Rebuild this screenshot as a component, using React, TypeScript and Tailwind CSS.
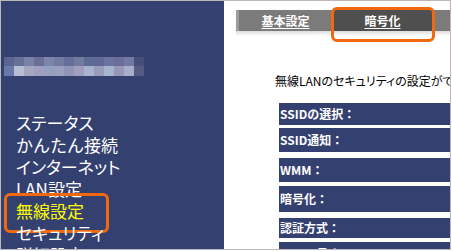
const mosaicTop = [
  'bg-[#5a6590]', 'bg-[#66719a]', 'bg-[#7a82a8]', 'bg-[#6a6f96]', 'bg-[#7a87ab]', 'bg-[#737ba0]', 'bg-[#636e99]',
  'bg-[#727aa0]', 'bg-[#5e6a96]', 'bg-[#5f6993]', 'bg-[#6b74a0]', 'bg-[#6a6f97]', 'bg-[#717ba2]', 'bg-[#454f7a]',
]
const mosaicBottom = [
  'bg-[#6878a8]', 'bg-[#b8bed6]', 'bg-[#a5a6bf]', 'bg-[#a09fc0]', 'bg-[#97a0c0]', 'bg-[#9ba0bf]', 'bg-[#8f96b8]',
  'bg-[#a09fbf]', 'bg-[#a8b4cf]', 'bg-[#9b9bba]', 'bg-[#a9b5ce]', 'bg-[#9797b8]', 'bg-[#a6aec9]', 'bg-[#555a82]',
]

const nav = ['ステータス', 'かんたん接続', 'インターネット', 'LAN設定', '無線設定', 'セキュリティ', '詳細設定']

// 右側の設定行（高さと間隔は画面に合わせて個別指定）
const rows = [
  { label: 'SSIDの選択：', cls: 'h-[22px]' },
  { label: 'SSID通知：', cls: 'h-[24px] mt-[3px]' },
  { label: 'WMM：', cls: 'h-[24px] mt-[6px]' },
  { label: '暗号化：', cls: 'h-[26px] mt-[4px]' },
  { label: '認証方式：', cls: 'h-[20px] mt-[6px]' },
  { label: 'キーの長さ', cls: 'h-[24px] mt-[4px]' },
]

function App() {
  return (
    <div className="w-[451px] h-[250px] overflow-hidden border border-[#bcb8b8] bg-white flex font-['Noto_Sans_CJK_JP',sans-serif]">
      <aside className="w-[223px] shrink-0 bg-[#344170] flex flex-col">
        <div className="shrink-0 mt-[56px] pl-[3px] flex flex-col">
          <div className="flex">
            {mosaicTop.map((c, i) => <div key={i} className={`w-[10px] h-[9px] ${c}`} />)}
          </div>
          <div className="flex">
            {mosaicBottom.map((c, i) => <div key={i} className={`w-[10px] h-[10px] ${c}`} />)}
          </div>
        </div>
        <ul className="shrink-0 mt-[36px] flex flex-col text-[17px] leading-[22px]">
          {nav.map((n) => (
            <li
              key={n}
              className={`shrink-0 h-[22px] relative pl-[15px] whitespace-nowrap ${n === '無線設定' ? 'text-[#ffff00]' : 'text-white'} ${n === 'かんたん接続' ? '' : "[font-feature-settings:'palt']"}`}
            >
              {n}
              {n === '無線設定' && (
                <span className="absolute left-[3px] top-[-7px] w-[105px] h-[40px] border-[3px] border-[#f0690f] rounded-[6px]" />
              )}
            </li>
          ))}
        </ul>
      </aside>
      <main className="flex-1 flex flex-col min-w-0">
        <div className="shrink-0 mt-[9px] ml-[12px] flex h-[21px] bg-[#7b7b7b]">
          <div className="w-[96px] h-full flex items-center justify-center border-l-[3px] border-[#9c9c9c]">
            <span className="text-white font-bold text-[12px] underline underline-offset-2">基本設定</span>
          </div>
          <div className="relative w-[101px] h-full bg-[#4f4f4f] flex items-center justify-center">
            <span className="text-white font-bold text-[12px] underline underline-offset-2">暗号化</span>
            <span className="absolute left-[-1px] top-[-3px] w-[104px] h-[35px] border-[3px] border-[#f0690f] rounded-[6px]" />
          </div>
        </div>
        <div className="shrink-0 ml-[12px] h-[5px] bg-gradient-to-b from-[#dcdcdc] to-white" />
        <p className="shrink-0 h-[18px] mt-[36px] ml-[51px] text-[12px] leading-[18px] text-black whitespace-nowrap overflow-hidden [font-feature-settings:'palt']">
          無線LANのセキュリティの設定ができます。
        </p>
        <div className="shrink-0 mt-[13px] ml-[55px] flex flex-col">
          {rows.map((r) => (
            <div key={r.label} className={`shrink-0 bg-[#344170] flex items-center pl-[1px] text-white font-bold text-[12px] whitespace-nowrap ${r.cls}`}>
              {r.label}
            </div>
          ))}
        </div>
      </main>
    </div>
  )
}

export default App
